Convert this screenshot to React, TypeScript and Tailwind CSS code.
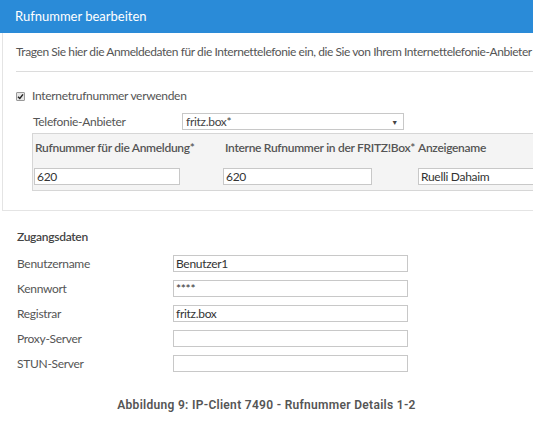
import React from 'react';

// Zugangsdaten rows
const fields = [
  { label: 'Benutzername', value: 'Benutzer1' },
  { label: 'Kennwort', value: '****' },
  { label: 'Registrar', value: 'fritz.box' },
  { label: 'Proxy-Server', value: '' },
  { label: 'STUN-Server', value: '' },
];

const font = { fontFamily: 'Lato, "Liberation Sans", sans-serif' };

const Box: React.FC<{ value: string; className: string }> = ({ value, className }) => (
  <div className={`h-[17px] border border-[#c8c8c8] bg-white pl-[2px] text-[12px] leading-[15px] text-[#333] ${className}`}>
    {value}
  </div>
);

const App: React.FC = () => {
  return (
    <div className="w-[533px] h-[425px] overflow-hidden bg-white text-[#555]" style={font}>
      <div className="h-[33px] bg-[#2a8bd8] pl-[15px] pt-[9px] text-[13px] leading-[15px] text-white">
        Rufnummer bearbeiten
      </div>

      <div className="ml-[2px] h-[178px] border-l border-b border-[#e4e4e4]">
        <p className="pl-[13px] pt-[12px] text-[12px] leading-[14px] tracking-[-0.42px] whitespace-nowrap">
          Tragen Sie hier die Anmeldedaten für die Internettelefonie ein, die Sie von Ihrem Internettelefonie-Anbieter
        </p>
        <div className="ml-[13px] mt-[12px] border-t border-[#dcdcdc]" />

        <div className="flex items-center pl-[13px] pt-[17px] text-[12px] leading-[14px] tracking-[-0.3px]">
          <span className="flex h-[9px] w-[9px] items-center justify-center rounded-[1px] border border-[#999] bg-[#e6e6e6]">
            <svg width="7" height="7" viewBox="0 0 7 7">
              <path d="M1 3.8 L2.8 5.5 L6 1.3" fill="none" stroke="#222" strokeWidth="1.4" />
            </svg>
          </span>
          <span className="ml-[7px]">Internetrufnummer verwenden</span>
        </div>

        <div className="flex items-center pl-[30px] pt-[10px] text-[12px] leading-[14px] tracking-[-0.3px]">
          <span className="w-[149px]">Telefonie-Anbieter</span>
          <div className="flex h-[17px] w-[222px] items-center justify-between border border-[#c8c8c8] bg-white pl-[3px] pr-[5px] text-[#444]">
            <span>fritz.box*</span>
            <span className="text-[7px]">▼</span>
          </div>
        </div>

        <div className="ml-[29px] mt-[3px] h-[58px] border border-r-0 border-[#d6d6d6] bg-[#f4f4f4] tracking-[-0.3px]">
          <div className="flex pt-[7px] text-[12px] leading-[14px] font-semibold text-[#555]">
            <span className="w-[191px] pl-[2px]">Rufnummer für die Anmeldung*</span>
            <span className="w-[194px] pl-[1px] whitespace-nowrap">Interne Rufnummer in der FRITZ!Box*</span>
            <span className="whitespace-nowrap">Anzeigename</span>
          </div>
          <div className="flex pt-[13px]">
            <Box value="620" className="ml-[1px] w-[146px]" />
            <Box value="620" className="ml-[43px] w-[149px]" />
            <Box value="Ruelli Dahaim" className="ml-[46px] flex-1 border-r-0" />
          </div>
        </div>
      </div>

      <div className="pl-[17px] pt-[19px] tracking-[-0.3px]">
        <div className="text-[12px] leading-[14px] font-semibold text-[#444]">Zugangsdaten</div>
        <div className="mt-[11px] flex flex-col gap-[8px]">
          {fields.map((f) => (
            <div key={f.label} className="flex items-center text-[12px] leading-[14px]">
              <span className="w-[156px]">{f.label}</span>
              <Box value={f.value} className="w-[235px]" />
            </div>
          ))}
        </div>
      </div>

      <div
        className="mt-[26px] text-center text-[12px] leading-[14px] font-semibold tracking-[0.3px] text-[#555]"
        style={{ fontFamily: 'Roboto, "Liberation Sans", sans-serif' }}
      >
        Abbildung 9: IP-Client 7490 - Rufnummer Details 1-2
      </div>
    </div>
  );
};

export default App;
